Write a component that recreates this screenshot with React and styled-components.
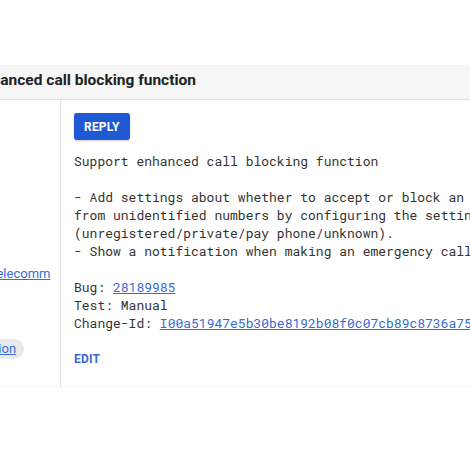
import styled, { createGlobalStyle } from 'styled-components'

const GlobalStyle = createGlobalStyle`
  html, body {
    margin: 0;
    padding: 0;
    background: #ffffff;
    overflow: hidden;
  }
  body {
    font-family: Roboto, "Noto Sans", Arial, sans-serif;
    color: #212121;
  }
`

const Page = styled.div`
  width: 1100px;
  margin-left: -240px;
  padding-top: 65px;
`

const Header = styled.header`
  display: flex;
  align-items: center;
  padding: 0 0 5px 155px;
  box-sizing: border-box;
  height: 35px;
  background: #f6f6f6;
  border-top: 1px solid #f0f0f0;
  border-bottom: 1px solid #dcdcdc;
`

const Title = styled.h1`
  margin: 0;
  font-size: 15.5px;
  font-weight: 700;
  color: #202124;
  white-space: nowrap;
`

const Body = styled.div`
  display: flex;
  align-items: stretch;
  border-bottom: 1px solid #f2f2f2;
`

const Sidebar = styled.aside`
  width: 301px;
  flex-shrink: 0;
  padding: 11px 0 8px;
  border-right: 1px solid #e0e0e0;
  box-sizing: border-box;
`

const InfoRow = styled.div`
  display: flex;
  align-items: center;
  height: 25px;
  font-size: 13px;
  white-space: nowrap;
`

const Label = styled.span`
  width: 60px;
  flex-shrink: 0;
  font-size: 11px;
  color: #5f6368;
  font-weight: 500;
`

const Value = styled.span`
  color: #333;
`

const SideLink = styled.a`
  color: #3a6ad4;
  text-decoration: underline;
`

const Chip = styled.span`
  display: inline-flex;
  align-items: center;
  height: 20px;
  margin-left: 4px;
  padding: 0 8px;
  border-radius: 10px;
  background: #e8eaed;
`

const Content = styled.section`
  flex: 1;
  padding: 13px 0 20px 13px;
`

const ReplyButton = styled.button`
  display: block;
  height: 27px;
  padding: 0 10px;
  border: none;
  border-radius: 3px;
  background: #1f5ad4;
  color: #ffffff;
  font-family: Roboto, Arial, sans-serif;
  font-size: 12px;
  font-weight: 700;
  letter-spacing: 0.2px;
  box-shadow: 0 1px 2px rgba(0, 0, 0, 0.2);
`

const Message = styled.pre`
  margin: 12px 0 0;
  font-family: "Roboto Mono", "DejaVu Sans Mono", monospace;
  font-size: 13px;
  line-height: 18px;
  color: #333;
  white-space: pre;
`

const MonoLink = styled.a`
  color: #3a6ad4;
  text-decoration: underline;
`

const EditLink = styled.div`
  margin-top: 20px;
  font-size: 12px;
  font-weight: 700;
  color: #3a6ad4;
  letter-spacing: 0.2px;
`

const rows = [
  { label: 'Updated', value: 'Apr 18' },
  { label: 'Owner', value: 'Kazuya' },
  { label: 'Assignee', value: '' },
  { label: 'Reviewers', value: 'Tyler' },
  { label: 'CC', value: '' },
  { label: 'Repo', value: '' },
]

const App = () => {
  return (
    <>
      <GlobalStyle />
      <Page>
        <Header>
          <Title>Support enhanced call blocking function</Title>
        </Header>
        <Body>
          <Sidebar>
            {rows.map((row) => (
              <InfoRow key={row.label}>
                <Label>{row.label}</Label>
                <Value>{row.value}</Value>
              </InfoRow>
            ))}
            <InfoRow>
              <Label />
              <SideLink href="#">platform/packages/services/Telecomm</SideLink>
            </InfoRow>
            <InfoRow>
              <Label>Branch</Label>
              <Value>master</Value>
            </InfoRow>
            <InfoRow>
              <Label>Parent</Label>
              <Value>1b2c</Value>
            </InfoRow>
            <InfoRow>
              <Label>Topic</Label>
              <Chip>
                <SideLink href="#">enhanced-call-blocking-function</SideLink>
              </Chip>
            </InfoRow>
          </Sidebar>
          <Content>
            <ReplyButton>REPLY</ReplyButton>
            <Message>
{`Support enhanced call blocking function

- Add settings about whether to accept or block an incoming call
from unidentified numbers by configuring the settings
(unregistered/private/pay phone/unknown).
- Show a notification when making an emergency call

Bug: `}<MonoLink href="#">28189985</MonoLink>{`
Test: Manual
Change-Id: `}<MonoLink href="#">I00a51947e5b30be8192b08f0c07cb89c8736a752</MonoLink>
            </Message>
            <EditLink>EDIT</EditLink>
          </Content>
        </Body>
      </Page>
    </>
  )
}

export default App
